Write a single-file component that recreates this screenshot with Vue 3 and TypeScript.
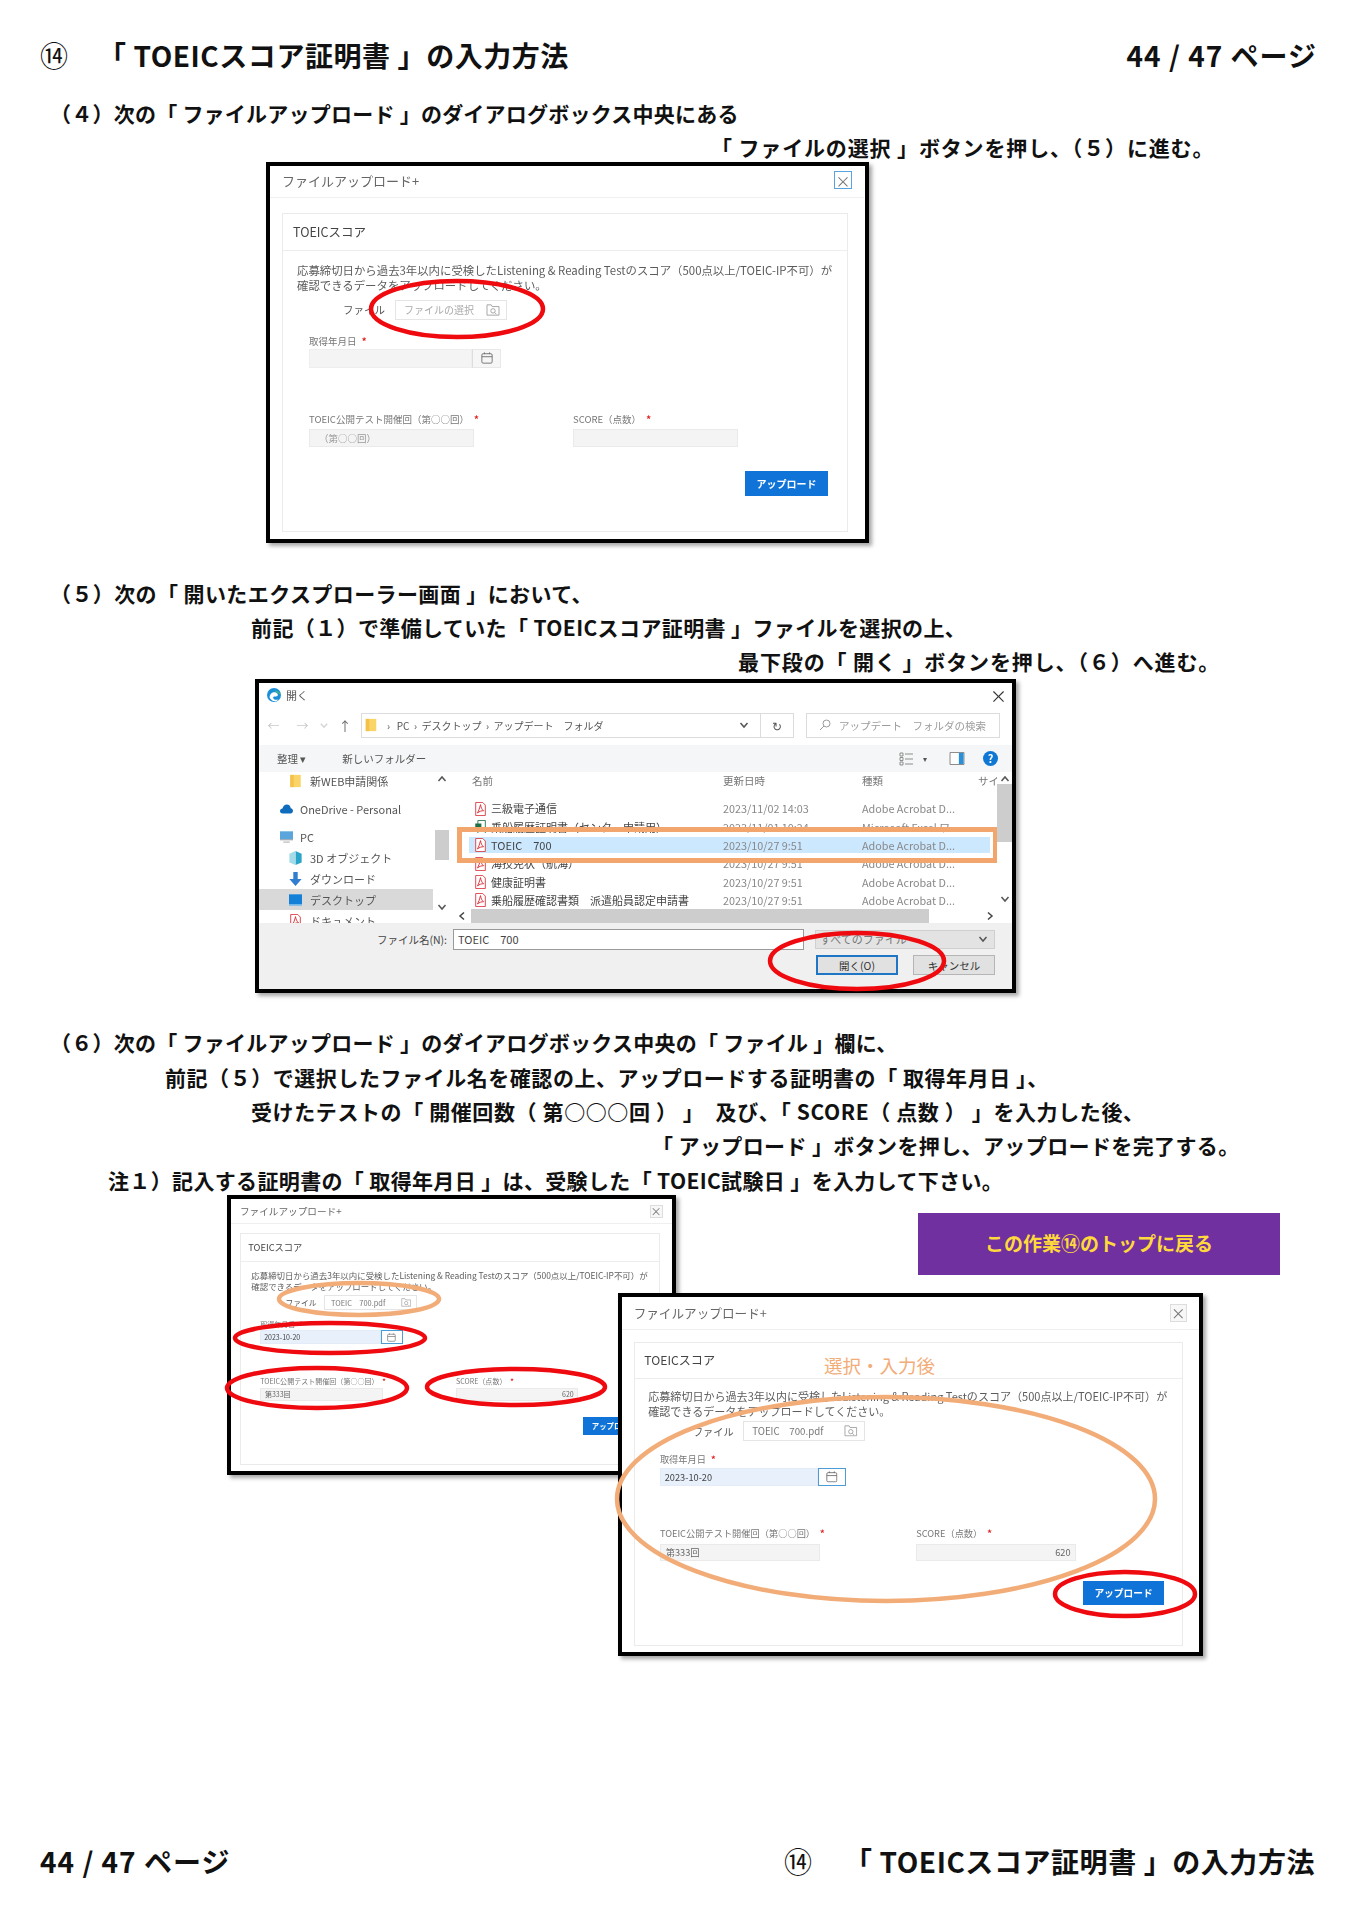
<template>
  <main class="page">
    <!-- shared icons -->
    <svg class="defs" aria-hidden="true">
      <symbol id="i-folder-search" viewBox="0 0 16 14">
        <path d="M1 1h5l1 2h8v10H1z" fill="none" stroke="currentColor" />
        <circle cx="8" cy="8" r="2.6" fill="none" stroke="currentColor" />
        <path d="M10 10l2 2" stroke="currentColor" />
      </symbol>
      <symbol id="i-cal" viewBox="0 0 14 14">
        <rect x="1" y="2" width="12" height="11" rx="1.5" fill="none" stroke="currentColor" />
        <path d="M1 5.500h12M4 .5v2M10 .5v2" stroke="currentColor" />
      </symbol>
      <symbol id="i-folder" viewBox="0 0 12 16">
        <path d="M0 1h12v14H0z" fill="#fbd467" />
        <path d="M0 1h4v14H0z" fill="#f4c24a" />
      </symbol>
      <symbol id="i-pdf" viewBox="0 0 12 16">
        <path d="M.5.5h8l3 3v12H.5z" fill="#fff" stroke="#d8333a" />
        <path d="M6 3C5 7 4 10 2.500 12.500 5 10.500 7 10 9.500 10 7.500 8.500 6.500 6 6 3z" fill="none" stroke="#d8333a" stroke-width="1.100" />
      </symbol>
      <symbol id="i-xls" viewBox="0 0 12 16">
        <path d="M3 .5h8.500v15H3z" fill="#fff" stroke="#1d7044" />
        <path d="M0 4h7v8H0z" fill="#1d7044" />
      </symbol>
      <symbol id="i-cloud" viewBox="0 0 16 11">
        <path d="M3.500 11C1 11 0 9.500 0 8c0-1.800 1.500-3 3-3 .6-3 3-5 5.500-5S13 2 13.200 4.500C15 4.800 16 6.200 16 7.800 16 9.700 14.600 11 13 11z" fill="#0f6cbd" />
      </symbol>
      <symbol id="i-pc" viewBox="0 0 16 16">
        <path d="M0 1h16v10H0z" fill="#5aa6dc" />
        <path d="M0 11h16v1H0z" fill="#8a8a8a" />
        <path d="M4 13.500h8v1.500H4z" fill="#b9b9b9" />
      </symbol>
      <symbol id="i-cube" viewBox="0 0 14 16">
        <path d="M7 0l7 3v10l-7 3z" fill="#2aa4c8" />
        <path d="M7 0L0 3v10l7 3z" fill="#a4dbe8" />
      </symbol>
      <symbol id="i-down" viewBox="0 0 14 16">
        <path d="M4.500 0h5v8H14l-7 8-7-8h4.500z" fill="#2f7ed0" />
      </symbol>
      <symbol id="i-desk" viewBox="0 0 16 14">
        <path d="M0 0h16v12H0z" fill="#1580d8" />
        <path d="M0 12h16v2H0z" fill="#6db5ea" />
      </symbol>
      <symbol id="i-up" viewBox="0 0 10 10"><path d="M1.500 7L5 3l3.500 4" fill="none" stroke="#555" stroke-width="1.500" /></symbol>
      <symbol id="i-dn" viewBox="0 0 10 10"><path d="M1.500 3L5 7l3.500-4" fill="none" stroke="#555" stroke-width="1.500" /></symbol>
      <symbol id="i-lt" viewBox="0 0 10 10"><path d="M7 1.500L3 5l4 3.500" fill="none" stroke="#444" stroke-width="1.500" /></symbol>
      <symbol id="i-rt" viewBox="0 0 10 10"><path d="M3 1.500L7 5 3 8.500" fill="none" stroke="#444" stroke-width="1.500" /></symbol>
    </svg>

    <header class="running-head">
      <h1><span class="num">⑭</span>「 TOEICスコア証明書 」の入力方法</h1>
      <span class="pager">44 / 47 ページ</span>
    </header>

    <p v-for="line in step4" :key="line.text" class="line" :style="lineStyle(line)">{{ line.text }}</p>

    <section class="figure fig-one">
      <article class="shot" :style="shotStyle(dialogs[0])">
        <div class="dialog plain" :style="{ zoom: dialogs[0].scale, height: dialogs[0].innerH + 'px' }">
          <div class="dlg-title">
            <span>ファイルアップロード+</span>
            <b class="dlg-close active">×</b>
          </div>
          <div class="card">
            <div class="card-head">TOEICスコア</div>
            <div class="card-body">
              <p class="lead">応募締切日から過去3年以内に受検したListening &amp; Reading Testのスコア（500点以上/TOEIC-IP不可）が<br />確認できるデータをアップロードしてください。</p>
              <div class="file-row">
                <label>ファイル</label>
                <div class="file-box"><span>ファイルの選択</span><svg class="ic16"><use href="#i-folder-search" /></svg></div>
              </div>
              <label class="lbl date-lbl">取得年月日 <i>*</i></label>
              <div class="date-box"><span></span><em><svg class="ic13"><use href="#i-cal" /></svg></em></div>
              <div class="pair">
                <div><label class="lbl">TOEIC公開テスト開催回（第○○回） <i>*</i></label><div class="inp ph">（第○○回）</div></div>
                <div><label class="lbl">SCORE（点数） <i>*</i></label><div class="inp"></div></div>
              </div>
              <div class="actions"><button type="button">アップロード</button></div>
            </div>
          </div>
        </div>
        <svg class="marks"><ellipse v-for="(m, i) in dialogs[0].marks" :key="i" v-bind="m" /></svg>
      </article>
    </section>

    <p v-for="line in step5" :key="line.text" class="line" :style="lineStyle(line)">{{ line.text }}</p>

    <section class="figure fig-two">
      <article class="explorer">
        <div class="ex-inner">
          <div class="ex-title">
            <svg class="edge" viewBox="0 0 16 16">
              <circle cx="8" cy="8" r="8" fill="#1a8fd8" />
              <path d="M3 11c0-5 4-7 7-6 3 1 3 4 1 4.500-2 .5-4-.5-4 1.500 0 2 3 3 6 2-2 3-7 3-10-2z" fill="#fff" />
              <path d="M8 3c3 0 7 1.500 8 5-1-1-4-3-8-5z" fill="#53c55a" />
            </svg>
            <span>開く</span>
            <b>×</b>
          </div>
          <div class="ex-addr">
            <span class="nav">←</span><span class="nav">→</span><svg class="nav-dn"><use href="#i-dn" /></svg><span class="nav up">↑</span>
            <div class="addr-box">
              <svg class="ic-folder"><use href="#i-folder" /></svg>
              <span class="crumbs">›&nbsp;&nbsp; PC &nbsp;›&nbsp; デスクトップ &nbsp;›&nbsp; アップデート　フォルダ</span>
              <svg class="caret"><use href="#i-dn" /></svg>
              <span class="refresh">↻</span>
            </div>
            <div class="search-box"><svg class="glass" viewBox="0 0 12 12"><circle cx="7.500" cy="4.500" r="3.500" fill="none" stroke="#999" /><path d="M5 7l-4 4" stroke="#999" /></svg>アップデート　フォルダの検索</div>
          </div>
          <div class="ex-tools">
            <span class="t-org">整理 ▾</span>
            <span>新しいフォルダー</span>
            <span class="t-right">
              <svg class="view" viewBox="0 0 16 14"><path d="M1 1h3v3H1zM1 5.500h3v3H1zM1 10h3v3H1zM6 2h8M6 7h8M6 12h8" fill="none" stroke="#8d8d8d" /></svg>
              <span class="t-drop">▾</span>
              <svg class="pane" viewBox="0 0 16 14"><path d="M.5.5h15v13H.5z" fill="#fff" stroke="#7f7f7f" /><path d="M10 1h5v12h-5z" fill="#2b8fd8" /></svg>
              <span class="help">?</span>
            </span>
          </div>
          <div class="ex-body">
            <nav class="tree">
              <div v-for="n in tree" :key="n.name" class="tree-item" :class="n.cls">
                <svg class="tree-ic"><use :href="n.icon" /></svg>{{ n.name }}
              </div>
            </nav>
            <div class="vbar left-bar"><svg><use href="#i-up" /></svg><i></i><svg><use href="#i-dn" /></svg></div>
            <div class="list-area">
              <div class="list-clip">
                <div class="list-head"><span>名前</span><span>更新日時</span><span>種類</span><span>サイ</span></div>
                <div v-for="r in files" :key="r.name" class="file-line" :class="{ sel: r.sel }">
                  <span class="f-name"><svg class="f-ic"><use :href="r.icon" /></svg>{{ r.name }}</span>
                  <span class="f-meta">{{ r.date }}</span>
                  <span class="f-meta">{{ r.type }}</span>
                </div>
              </div>
              <div class="hbar"><svg><use href="#i-lt" /></svg><i></i><svg><use href="#i-rt" /></svg></div>
            </div>
            <div class="vbar right-bar"><svg><use href="#i-up" /></svg><i></i><svg><use href="#i-dn" /></svg></div>
          </div>
          <div class="ex-foot">
            <label>ファイル名(N):</label>
            <div class="fn-input">TOEIC　700</div>
            <div class="fn-type">すべてのファイル<svg><use href="#i-dn" /></svg></div>
            <button type="button" class="btn-open">開く(O)</button>
            <button type="button" class="btn-cancel">キャンセル</button>
          </div>
        </div>
        <svg class="marks"><ellipse cx="602" cy="282" rx="87" ry="28" /></svg>
      </article>
    </section>

    <p v-for="line in step6" :key="line.text" class="line" :style="lineStyle(line)">{{ line.text }}</p>

    <section class="stage">
      <template v-for="(d, idx) in dialogs.slice(1)" :key="idx">
        <article class="shot" :class="{ 'shot-over': idx === 1 }" :style="shotStyle(d)">
          <div class="dialog filled" :style="{ zoom: d.scale, height: d.innerH + 'px' }">
            <div class="dlg-title">
              <span>ファイルアップロード+</span>
              <b class="dlg-close">×</b>
            </div>
            <div class="card">
              <div class="card-head">TOEICスコア</div>
              <div class="card-body">
                <p class="lead">応募締切日から過去3年以内に受検したListening &amp; Reading Testのスコア（500点以上/TOEIC-IP不可）が<br />確認できるデータをアップロードしてください。</p>
                <div class="file-row">
                  <label>ファイル</label>
                  <div class="file-box has"><span>TOEIC　700.pdf</span><svg class="ic16"><use href="#i-folder-search" /></svg></div>
                </div>
                <label class="lbl date-lbl">取得年月日 <i>*</i></label>
                <div class="date-box on"><span>2023-10-20</span><em><svg class="ic13"><use href="#i-cal" /></svg></em></div>
                <div class="pair">
                  <div><label class="lbl">TOEIC公開テスト開催回（第○○回） <i>*</i></label><div class="inp val">第333回</div></div>
                  <div><label class="lbl">SCORE（点数） <i>*</i></label><div class="inp val num-val">620</div></div>
                </div>
                <div class="actions"><button type="button">アップロード</button></div>
              </div>
            </div>
          </div>
          <span v-if="idx === 1" class="after-note">選択・入力後</span>
          <svg class="marks">
            <ellipse v-for="(m, i) in d.marks" :key="i" v-bind="m" />
          </svg>
        </article>
        <a v-if="idx === 0" class="back-top" href="#">この作業⑭のトップに戻る</a>
      </template>
    </section>

    <footer class="running-foot">
      <span class="pager">44 / 47 ページ</span>
      <h2><span class="num">⑭</span>「 TOEICスコア証明書 」の入力方法</h2>
    </footer>
  </main>
</template>

<script setup lang="ts">
interface Line {
  x: number
  ls: number
  text: string
}

interface Mark {
  cx: number
  cy: number
  rx: number
  ry: number
  class?: string
}

interface Dialog {
  w: number
  h: number
  left: number
  top?: number
  scale: number
  innerH: number
  marks: Mark[]
}

const step4: Line[] = [
  { x: 50, ls: 0.23, text: '（４）次の「 ファイルアップロード 」のダイアログボックス中央にある' },
  { x: 711, ls: 0.85, text: '「 ファイルの選択 」ボタンを押し、（５）に進む。' }
]

const step5: Line[] = [
  { x: 50, ls: 0.4, text: '（５）次の「 開いたエクスプローラー画面 」において、' },
  { x: 251, ls: 0.38, text: '前記（１）で準備していた「 TOEICスコア証明書 」ファイルを選択の上、' },
  { x: 738, ls: 0.88, text: '最下段の「 開く 」ボタンを押し、（６）へ進む。' }
]

const step6: Line[] = [
  { x: 50, ls: 0.25, text: '（６）次の「 ファイルアップロード 」のダイアログボックス中央の「 ファイル 」欄に、' },
  { x: 165, ls: 0.55, text: '前記（５）で選択したファイル名を確認の上、アップロードする証明書の「 取得年月日 」、' },
  { x: 251, ls: 0.6, text: '受けたテストの「 開催回数（ 第○○○回 ） 」　及び、「 SCORE（ 点数 ） 」を入力した後、' },
  { x: 652, ls: 0.38, text: '「 アップロード 」ボタンを押し、アップロードを完了する。' },
  { x: 108, ls: 0.35, text: '注１）記入する証明書の「 取得年月日 」は、受験した「 TOEIC試験日 」を入力して下さい。' }
]

const dialogs: Dialog[] = [
  {
    w: 603, h: 381, left: 266, scale: 1, innerH: 373,
    marks: [{ cx: 191, cy: 147, rx: 86, ry: 28 }]
  },
  {
    w: 449, h: 280, left: 227, scale: 0.742, innerH: 366,
    marks: [
      { cx: 132, cy: 104, rx: 80, ry: 16, class: 'orange' },
      { cx: 103, cy: 143, rx: 95, ry: 15 },
      { cx: 90, cy: 193, rx: 90, ry: 20 },
      { cx: 289, cy: 192, rx: 89, ry: 18 }
    ]
  },
  {
    w: 585, h: 363, left: 618, top: 98, scale: 0.971, innerH: 366,
    marks: [
      { cx: 268, cy: 206, rx: 269, ry: 102, class: 'orange' },
      { cx: 507, cy: 301, rx: 70, ry: 22 }
    ]
  }
]

const tree = [
  { name: '新WEB申請関係', icon: '#i-folder', cls: 'lvl' },
  { name: 'OneDrive - Personal', icon: '#i-cloud', cls: 'top' },
  { name: 'PC', icon: '#i-pc', cls: 'top' },
  { name: '3D オブジェクト', icon: '#i-cube', cls: 'lvl' },
  { name: 'ダウンロード', icon: '#i-down', cls: 'lvl' },
  { name: 'デスクトップ', icon: '#i-desk', cls: 'lvl current' },
  { name: 'ドキュメント', icon: '#i-pdf', cls: 'lvl' }
]

const files = [
  { name: '三級電子通信', date: '2023/11/02 14:03', type: 'Adobe Acrobat D...', icon: '#i-pdf', sel: false },
  { name: '乗船履歴証明書（センター申請用）', date: '2023/11/01 10:24', type: 'Microsoft Excel ワ...', icon: '#i-xls', sel: false },
  { name: 'TOEIC　700', date: '2023/10/27 9:51', type: 'Adobe Acrobat D...', icon: '#i-pdf', sel: true },
  { name: '海技免状（航海）', date: '2023/10/27 9:51', type: 'Adobe Acrobat D...', icon: '#i-pdf', sel: false },
  { name: '健康証明書', date: '2023/10/27 9:51', type: 'Adobe Acrobat D...', icon: '#i-pdf', sel: false },
  { name: '乗船履歴確認書類　派遣船員認定申請書', date: '2023/10/27 9:51', type: 'Adobe Acrobat D...', icon: '#i-pdf', sel: false }
]

function lineStyle(line: Line) {
  return { paddingLeft: line.x + 'px', letterSpacing: line.ls + 'px' }
}

function shotStyle(d: Dialog) {
  return {
    width: d.w + 'px',
    height: d.h + 'px',
    marginLeft: d.top === undefined ? d.left + 'px' : undefined,
    left: d.top === undefined ? undefined : d.left + 'px',
    top: d.top === undefined ? undefined : d.top + 'px'
  }
}
</script>

<style scoped>
.page {
  display: flex;
  flex-direction: column;
  width: 1355px;
  min-height: 1920px;
  box-sizing: border-box;
  background: #fff;
  color: #111;
  font-family: "Noto Sans CJK JP", "Noto Sans", sans-serif;
}

.defs {
  position: absolute;
  width: 0;
  height: 0;
}

.running-head,
.running-foot {
  display: flex;
  justify-content: space-between;
  align-items: center;
  height: 44px;
  padding: 0 38px 0 40px;
  font-size: 28px;
  font-weight: 700;
}

.running-head {
  margin-top: 33px;
  margin-bottom: 20px;
}

.running-foot {
  margin-top: auto;
  margin-bottom: 37px;
  padding-right: 40px;
}

.running-head h1,
.running-foot h2 {
  margin: 0;
  font-size: inherit;
  font-weight: inherit;
  letter-spacing: 0.56px;
}

.pager {
  letter-spacing: 1px;
}

.num {
  display: inline-block;
  width: 58px;
  font-weight: 400;
}

.running-foot .num {
  width: 60px;
}

.line {
  margin: 0;
  height: 34.3px;
  font-size: 21px;
  font-weight: 700;
  line-height: 32px;
  white-space: pre;
}

.figure {
  flex: none;
}

.fig-one {
  margin-top: -4px;
  margin-bottom: 34px;
}

.fig-two {
  margin-bottom: 33px;
}

/* screenshots pasted into the page */
.shot {
  position: relative;
  box-sizing: border-box;
  border: 4px solid #000;
  background: #fff;
  box-shadow: 3px 3px 4px rgba(0, 0, 0, 0.35);
}

.shot-over {
  position: absolute;
}

.dialog {
  width: 594px;
  display: flex;
  flex-direction: column;
  color: #555;
  filter: blur(0.4px);
}

.dlg-title {
  display: flex;
  justify-content: space-between;
  align-items: center;
  flex: none;
  height: 33px;
  padding: 0 12px;
  border-bottom: 1px solid #efefef;
  font-size: 13px;
  color: #666;
}

.plain .dlg-title {
  height: 29px;
  padding-bottom: 2px;
}

.dlg-close {
  display: flex;
  align-items: center;
  justify-content: center;
  width: 18px;
  height: 18px;
  box-sizing: border-box;
  border: 1px solid #ddd;
  background: #f7f7f7;
  font-size: 15px;
  font-weight: 400;
  color: #777;
}

.dlg-close.active {
  border-color: #5ba3dd;
  background: #fff;
}

.card {
  display: flex;
  flex-direction: column;
  flex: 1;
  margin: 12px 16px 7px 12px;
  border: 1px solid #ebebeb;
}

.plain .card {
  margin-top: 15px;
}

.card-head {
  flex: none;
  height: 36px;
  padding-left: 10px;
  border-bottom: 1px solid #ededed;
  font-size: 12.500px;
  line-height: 36px;
  color: #444;
}

.card-body {
  position: relative;
  flex: 1;
}

.lead {
  margin: 11px 0 0 14px;
  font-size: 11.400px;
  line-height: 15px;
  white-space: nowrap;
  color: #5c5c5c;
}

.plain .lead {
  margin-top: 12px;
}

.file-row {
  display: flex;
  align-items: center;
  margin: 7px 0 0 60px;
  font-size: 10.500px;
}

.filled .file-row {
  margin-top: 3px;
}

.file-row label {
  width: 52px;
}

.file-box {
  display: flex;
  align-items: center;
  justify-content: space-between;
  box-sizing: border-box;
  width: 112px;
  height: 20px;
  padding: 0 6px 0 8px;
  border: 1px solid #e5e5e5;
  font-size: 10px;
  color: #aaa;
}

.file-box.has {
  width: 125px;
  color: #777;
}

.ic16 {
  width: 14px;
  height: 12px;
  color: #999;
}

.ic13 {
  width: 12px;
  height: 12px;
  color: #666;
}

.lbl {
  display: block;
  height: 14px;
  font-size: 9.500px;
  line-height: 14px;
  color: #777;
  white-space: nowrap;
}

.lbl i {
  margin-left: 3px;
  font-style: normal;
  font-weight: 700;
  color: #e02020;
}

.date-lbl {
  margin: 14px 0 1px 26px;
}

.date-box {
  display: flex;
  width: 192px;
  height: 19px;
  margin-left: 26px;
}

.date-box span {
  flex: 1;
  padding-left: 4px;
  background: #f4f4f4;
  border: 1px solid #eee;
  font-size: 9.500px;
  line-height: 17px;
  color: #444;
}

.date-box em {
  display: flex;
  align-items: center;
  justify-content: center;
  width: 27px;
  background: #f6f6f6;
  border: 1px solid #e8e8e8;
  border-left-color: #ddd;
}

.date-box.on span {
  background: #e8f0fb;
  border-color: #e2ebf7;
}

.date-box.on em {
  background: #fff;
  border-color: #4c9ad6;
}

.pair {
  display: flex;
  gap: 99px;
  margin: 44px 0 0 26px;
}

.filled .date-lbl {
  margin-top: 13px;
}

.filled .pair {
  margin-top: 42px;
}

.filled .actions {
  margin-top: 21px;
}

.filled .actions button {
  height: 24px;
}

.pair > div {
  width: 165px;
}

.inp {
  box-sizing: border-box;
  height: 18px;
  margin-top: 3px;
  padding: 0 5px;
  background: #f4f4f4;
  border: 1px solid #eaeaea;
  font-size: 9.500px;
  line-height: 16px;
  color: #999;
}

.inp.ph {
  padding-left: 9px;
}

.inp.val {
  color: #666;
}

.inp.num-val {
  text-align: right;
}

.actions {
  display: flex;
  justify-content: flex-end;
  margin: 24px 19px 0 0;
}

.actions button {
  width: 83px;
  height: 25px;
  padding: 0;
  border: 0;
  background: #0f73d8;
  color: #fff;
  font: 700 10px "Noto Sans CJK JP", sans-serif;
}

.marks {
  position: absolute;
  left: -4px;
  top: -4px;
  width: 100%;
  height: 100%;
  overflow: visible;
  pointer-events: none;
}

.marks ellipse {
  fill: none;
  stroke: #ee0a0f;
  stroke-width: 4.500;
}

.marks ellipse.orange {
  stroke: #f2ac78;
  stroke-width: 4.500;
}

.after-note {
  position: absolute;
  left: 202px;
  top: 56px;
  font-size: 18.500px;
  color: #f2ac78;
  line-height: 24px;
}

/* explorer window */
.explorer {
  position: relative;
  box-sizing: border-box;
  width: 761px;
  height: 314px;
  margin-left: 255px;
  border: 4px solid #000;
  background: #fff;
  box-shadow: 3px 3px 4px rgba(0, 0, 0, 0.35);
}

.ex-inner {
  display: flex;
  flex-direction: column;
  height: 306px;
  font-size: 11px;
  color: #555;
  filter: blur(0.35px);
}

.ex-title {
  display: flex;
  align-items: center;
  flex: none;
  height: 24px;
  padding: 0 5px 0 8px;
  gap: 5px;
}

.ex-title b {
  margin-left: auto;
  font-size: 17px;
  font-weight: 400;
  color: #333;
}

.edge {
  width: 14px;
  height: 14px;
}

.ex-addr {
  display: flex;
  align-items: center;
  flex: none;
  height: 36px;
}

.nav {
  width: 29px;
  text-align: center;
  font-size: 12px;
  color: #c9c9c9;
}

.nav-dn {
  width: 14px;
  height: 9px;
  opacity: 0.25;
}

.nav.up {
  width: 28px;
  font-size: 13px;
  color: #666;
}

.addr-box {
  display: flex;
  align-items: center;
  box-sizing: border-box;
  width: 433px;
  height: 25px;
  margin-left: 2px;
  padding-left: 3px;
  border: 1px solid #dcdcdc;
}

.ic-folder {
  width: 12px;
  height: 14px;
  margin-right: 10px;
}

.crumbs {
  flex: 1;
  font-size: 10px;
  color: #555;
  white-space: pre;
}

.caret {
  width: 10px;
  height: 10px;
  margin-right: 11px;
}

.refresh {
  width: 32px;
  line-height: 23px;
  border-left: 1px solid #dcdcdc;
  text-align: center;
  font-size: 12px;
}

.search-box {
  display: flex;
  align-items: center;
  box-sizing: border-box;
  width: 194px;
  height: 25px;
  margin-left: 12px;
  padding-left: 12px;
  border: 1px solid #dcdcdc;
  font-size: 10.500px;
  white-space: nowrap;
  color: #9c9c9c;
}

.glass {
  width: 12px;
  height: 12px;
  margin-right: 8px;
}

.ex-tools {
  display: flex;
  align-items: center;
  flex: none;
  gap: 32px;
  height: 27px;
  margin-top: 2px;
  padding: 0 14px 0 18px;
  background: #f5f6f7;
  font-size: 10.500px;
}

.t-org {
  margin-right: 4px;
}

.t-right {
  display: flex;
  align-items: center;
  margin-left: auto;
}

.view {
  width: 16px;
  height: 14px;
}

.t-drop {
  margin: 0 22px 0 8px;
  font-size: 8px;
}

.pane {
  width: 16px;
  height: 13px;
  margin-right: 18px;
}

.help {
  width: 15px;
  height: 15px;
  border-radius: 50%;
  background: #0f78d4;
  color: #fff;
  font-size: 11px;
  font-weight: 700;
  line-height: 15px;
  text-align: center;
}

.ex-body {
  display: flex;
  flex: none;
  height: 151px;
  overflow: hidden;
}

.tree {
  flex: none;
  width: 174px;
  margin-top: -2px;
  overflow: hidden;
}

.tree-item {
  display: flex;
  align-items: center;
  height: 21px;
  white-space: nowrap;
}

.tree-item.lvl {
  padding-left: 30px;
}

.tree-item.top {
  margin-bottom: 7px;
  padding-left: 21px;
}

.tree-item.top + .lvl {
  margin-top: -7px;
}

.tree-item:first-child {
  margin-bottom: 7px;
}

.tree-item.current {
  background: #d9d9d9;
}

.tree-ic {
  width: 13px;
  height: 14px;
  margin-right: 8px;
}

.tree-item.top .tree-ic {
  margin-right: 7px;
}

.vbar {
  display: flex;
  flex-direction: column;
  flex: none;
  align-items: center;
  width: 14px;
}

.vbar svg {
  flex: none;
  width: 10px;
  height: 10px;
}

.left-bar {
  margin-left: 2px;
  padding-top: 2px;
}

.left-bar i {
  width: 100%;
  height: 30px;
  margin: 46px 0 42px;
  background: #cdcdcd;
}

.right-bar {
  width: 15px;
  padding-top: 2px;
}

.right-bar i {
  width: 100%;
  height: 58px;
  margin-bottom: 52px;
  background: #cdcdcd;
}

.list-area {
  flex: 1;
  min-width: 0;
  display: flex;
  flex-direction: column;
}

.list-clip {
  flex: none;
  height: 137px;
  margin-left: 8px;
  padding-left: 12px;
  overflow: hidden;
}

.list-head,
.file-line {
  display: grid;
  grid-template-columns: 254px 139px 116px 1fr;
}

.list-head {
  height: 27px;
  box-sizing: border-box;
  line-height: 18px;
  font-size: 10.500px;
  white-space: nowrap;
  color: #777;
}

.list-head span:first-child {
  padding-left: 3px;
}

.file-line {
  position: relative;
  width: 521px;
  height: 18.300px;
  line-height: 18.300px;
  grid-template-columns: 254px 139px 1fr;
  white-space: nowrap;
  overflow: hidden;
}

.file-line.sel {
  z-index: 1;
  height: 16px;
  margin: 1.200px 0;
  overflow: visible;
  line-height: 16px;
  background: #cce8ff;
  box-shadow: 0 0 0 4px #fff;
}

.file-line.sel::before {
  content: "";
  position: absolute;
  left: -12px;
  right: -8px;
  top: -10px;
  bottom: -10px;
  border: 5px solid #f2a56d;
}

.f-name {
  display: flex;
  align-items: center;
  padding-left: 6px;
  color: #444;
  overflow: hidden;
}

.f-ic {
  flex: none;
  width: 11px;
  height: 14px;
  margin-right: 5px;
}

.f-meta {
  font-size: 10.800px;
  color: #888;
}

.hbar {
  display: flex;
  align-items: center;
  flex: none;
  height: 14px;
}

.hbar svg {
  flex: none;
  width: 10px;
  height: 10px;
  margin-left: 8px;
}

.hbar i {
  width: 458px;
  height: 100%;
  margin: 0 48px 0 4px;
  background: #cdcdcd;
}

.ex-foot {
  display: grid;
  grid-template-columns: 194px 351px 12px 82px 15px 82px;
  grid-template-rows: 20px 20px;
  row-gap: 6px;
  flex: 1;
  padding-top: 6px;
  background: #f0f0f0;
  align-items: center;
}

.ex-foot label {
  padding-right: 6px;
  font-size: 10.500px;
  text-align: right;
  color: #444;
}

.fn-input {
  box-sizing: border-box;
  height: 21px;
  padding-left: 4px;
  background: #fff;
  border: 1px solid #9a9a9a;
  line-height: 19px;
  color: #444;
}

.fn-type {
  display: flex;
  justify-content: space-between;
  align-items: center;
  grid-column: 4 / 7;
  box-sizing: border-box;
  height: 19px;
  padding: 0 6px 0 4px;
  margin-left: -1px;
  background: #e3e3e3;
  border: 1px solid #cfcfcf;
  line-height: 17px;
  color: #777;
}

.fn-type svg {
  width: 10px;
  height: 10px;
}

.btn-open,
.btn-cancel {
  height: 20px;
  padding: 0;
  font: 400 10.500px "Noto Sans CJK JP", sans-serif;
  color: #333;
}

.btn-open {
  grid-column: 4;
  grid-row: 2;
  background: #e1e1e1;
  border: 2px solid #1f76c4;
}

.btn-cancel {
  grid-column: 6;
  grid-row: 2;
  background: #e1e1e1;
  border: 1px solid #b5b5b5;
}

/* last block: overlapping screenshots */
.stage {
  position: relative;
  display: flex;
  align-items: flex-start;
  height: 465px;
  margin-top: -3px;
}

.back-top {
  display: block;
  width: 362px;
  height: 62px;
  margin: 18px 0 0 242px;
  background: #7030a0;
  color: #ffd93b;
  font-size: 19px;
  font-weight: 700;
  line-height: 60px;
  text-align: center;
  text-decoration: none;
}
</style>
